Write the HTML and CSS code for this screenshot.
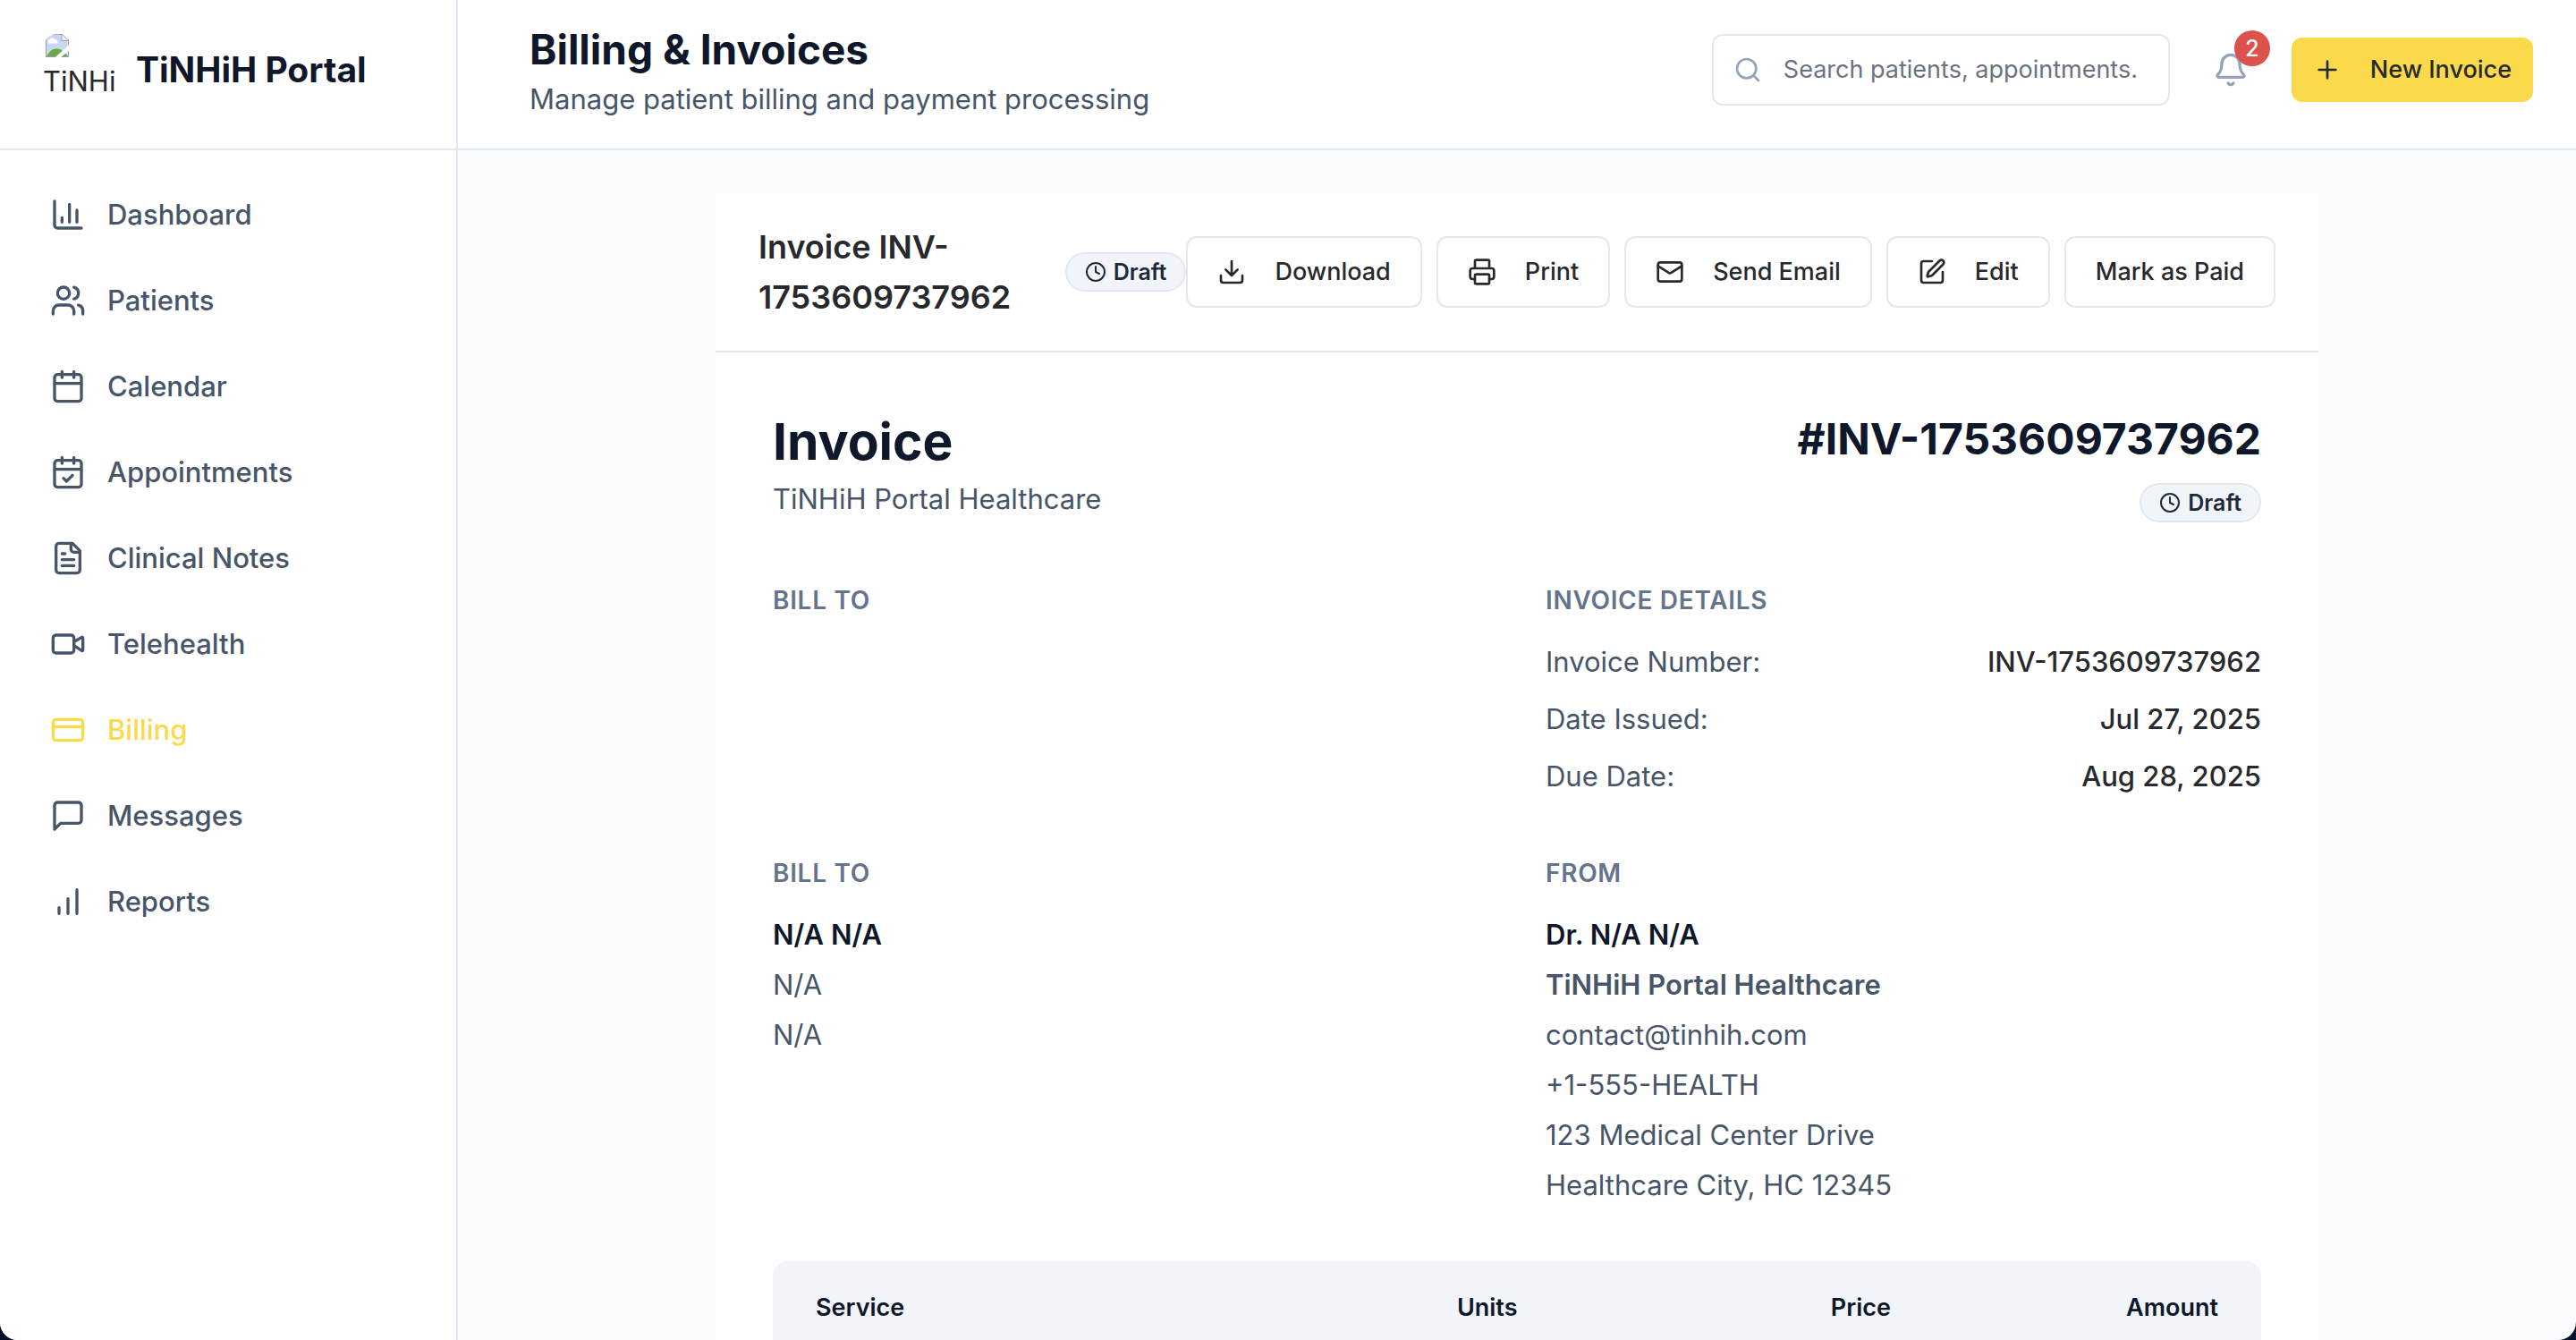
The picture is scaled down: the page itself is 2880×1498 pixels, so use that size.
FILE: index.html
```html
<!DOCTYPE html>
<html lang="en">
<head>
<meta charset="utf-8">
<title>Billing &amp; Invoices - TiNHiH Portal</title>
<link rel="stylesheet" href="styles.css">
</head>
<body>
<svg class="sprite" aria-hidden="true">
  <symbol id="i-clock" viewBox="0 0 24 24"><circle cx="12" cy="12" r="10"/><path d="M12 6v6l4 2"/></symbol>
</svg>
<div class="app">
  <aside class="sidebar">
    <div class="brand">
      <div class="logo" role="img" aria-label="TiNHiH Portal logo">
        <svg class="logo-icon" viewBox="0 0 32 32">
          <path d="M0 0h22l10 10v22H0z" fill="#c9d7f4"/>
          <path d="M4 13a4 4 0 0 1 2-6 5 5 0 0 1 8 1 3 3 0 0 1 2 5z" fill="#fff"/>
          <path d="M1 31C5 24 10 20 15 20s11 4 16 11z" fill="#6aaa46"/>
          <path d="M0.500 0.500H22L31.500 10V31.500H0.500z" fill="none" stroke="#8b8f96"/>
          <path d="M22 0v9h10z" fill="#f5f5f5" stroke="#8b8f96"/>
          <path d="M32 15v8L21 32h-8z" fill="#fff"/>
        </svg>
        <span class="logo-alt">TiNHi</span>
      </div>
      <span class="brand-name">TiNHiH Portal</span>
    </div>
    <nav class="nav">
      <a class="nav-item" href="#"><svg class="icon" viewBox="0 0 24 24"><path d="M3 3v16a2 2 0 0 0 2 2h16M18 17V9M13 17V5M8 17v-3"/></svg>Dashboard</a>
      <a class="nav-item" href="#"><svg class="icon" viewBox="0 0 24 24"><path d="M16 21v-2a4 4 0 0 0-4-4H6a4 4 0 0 0-4 4v2"/><circle cx="9" cy="7" r="4"/><path d="M22 21v-2a4 4 0 0 0-3-3.870M16 3.130a4 4 0 0 1 0 7.750"/></svg>Patients</a>
      <a class="nav-item" href="#"><svg class="icon" viewBox="0 0 24 24"><path d="M8 2v4M16 2v4M3 10h18"/><rect width="18" height="18" x="3" y="4" rx="2"/></svg>Calendar</a>
      <a class="nav-item" href="#"><svg class="icon" viewBox="0 0 24 24"><path d="M8 2v4M16 2v4M3 10h18M9 16l2 2 4-4"/><rect width="18" height="18" x="3" y="4" rx="2"/></svg>Appointments</a>
      <a class="nav-item" href="#"><svg class="icon" viewBox="0 0 24 24"><path d="M15 2H6a2 2 0 0 0-2 2v16a2 2 0 0 0 2 2h12a2 2 0 0 0 2-2V7Z"/><path d="M14 2v4a2 2 0 0 0 2 2h4M10 9H8M16 13H8M16 17H8"/></svg>Clinical Notes</a>
      <a class="nav-item" href="#"><svg class="icon" viewBox="0 0 24 24"><path d="m16 13 5.223 3.482a.5.5 0 0 0 .777-.416V7.870a.5.5 0 0 0-.752-.432L16 10.500"/><rect x="2" y="6" width="14" height="12" rx="2"/></svg>Telehealth</a>
      <a class="nav-item active" href="#" aria-current="page"><svg class="icon" viewBox="0 0 24 24"><rect width="20" height="14" x="2" y="5" rx="2"/><path d="M2 10h20"/></svg>Billing</a>
      <a class="nav-item" href="#"><svg class="icon" viewBox="0 0 24 24"><path d="M21 15a2 2 0 0 1-2 2H7l-4 4V5a2 2 0 0 1 2-2h14a2 2 0 0 1 2 2z"/></svg>Messages</a>
      <a class="nav-item" href="#"><svg class="icon" viewBox="0 0 24 24"><path d="M12 20V10M18 20V4M6 20v-4"/></svg>Reports</a>
    </nav>
  </aside>

  <div class="page">
    <header class="topbar">
      <div class="heading">
        <h1 class="page-title">Billing &amp; Invoices</h1>
        <p class="page-sub">Manage patient billing and payment processing</p>
      </div>
      <div class="tools">
        <label class="search">
          <svg class="icon icon-sm" viewBox="0 0 24 24"><circle cx="11" cy="11" r="8"/><path d="m21 21-4.300-4.300"/></svg>
          <input class="search-input" type="text" placeholder="Search patients, appointments." aria-label="Search">
        </label>
        <button class="bell" type="button" aria-label="Notifications">
          <svg class="icon" viewBox="0 0 24 24"><path d="M10.268 21a2 2 0 0 0 3.464 0M3.262 15.326A1 1 0 0 0 4 17h16a1 1 0 0 0 .740-1.673C19.410 13.956 18 12.499 18 8A6 6 0 0 0 6 8c0 4.499-1.411 5.956-2.738 7.326"/></svg>
          <span class="count">2</span>
        </button>
        <button class="btn btn-primary" type="button"><svg class="icon icon-sm" viewBox="0 0 24 24"><path d="M5 12h14M12 5v14"/></svg>New Invoice</button>
      </div>
    </header>

    <main class="content">
      <article class="card">
        <div class="card-head">
          <div class="card-title-group">
            <h2 class="card-title">Invoice INV-1753609737962</h2>
            <span class="badge"><svg class="icon icon-xs"><use href="#i-clock"/></svg>Draft</span>
          </div>
          <div class="actions">
            <button class="btn btn-outline" type="button"><svg class="icon icon-sm" viewBox="0 0 24 24"><path d="M21 15v4a2 2 0 0 1-2 2H5a2 2 0 0 1-2-2v-4M7 10l5 5 5-5M12 15V3"/></svg>Download</button>
            <button class="btn btn-outline" type="button"><svg class="icon icon-sm" viewBox="0 0 24 24"><path d="M6 18H4a2 2 0 0 1-2-2v-5a2 2 0 0 1 2-2h16a2 2 0 0 1 2 2v5a2 2 0 0 1-2 2h-2M6 9V3a1 1 0 0 1 1-1h10a1 1 0 0 1 1 1v6"/><rect x="6" y="14" width="12" height="8" rx="1"/></svg>Print</button>
            <button class="btn btn-outline" type="button"><svg class="icon icon-sm" viewBox="0 0 24 24"><rect width="20" height="16" x="2" y="4" rx="2"/><path d="m22 7-8.970 5.700a1.940 1.940 0 0 1-2.060 0L2 7"/></svg>Send Email</button>
            <button class="btn btn-outline" type="button"><svg class="icon icon-sm" viewBox="0 0 24 24"><path d="M12 3H5a2 2 0 0 0-2 2v14a2 2 0 0 0 2 2h14a2 2 0 0 0 2-2v-7"/><path d="M18.375 2.625a1 1 0 0 1 3 3l-9.013 9.014a2 2 0 0 1-.853.505l-2.873.840a.5.5 0 0 1-.620-.620l.840-2.873a2 2 0 0 1 .506-.852z"/></svg>Edit</button>
            <button class="btn btn-outline" type="button">Mark as Paid</button>
          </div>
        </div>

        <div class="card-body">
          <div class="invoice-head">
            <div>
              <h2 class="invoice-title">Invoice</h2>
              <p class="line">TiNHiH Portal Healthcare</p>
            </div>
            <div class="invoice-ref">
              <h3 class="invoice-no">#INV-1753609737962</h3>
              <span class="badge"><svg class="icon icon-xs"><use href="#i-clock"/></svg>Draft</span>
            </div>
          </div>

          <div class="columns">
            <section>
              <h4 class="label">Bill To</h4>
            </section>
            <section>
              <h4 class="label">Invoice Details</h4>
              <dl class="details">
                <div class="detail"><dt>Invoice Number:</dt><dd>INV-1753609737962</dd></div>
                <div class="detail"><dt>Date Issued:</dt><dd>Jul 27, 2025</dd></div>
                <div class="detail"><dt>Due Date:</dt><dd>Aug 28, 2025</dd></div>
              </dl>
            </section>
          </div>

          <div class="columns">
            <section>
              <h4 class="label">Bill To</h4>
              <p class="line name">N/A N/A</p>
              <p class="line">N/A</p>
              <p class="line">N/A</p>
            </section>
            <section>
              <h4 class="label">From</h4>
              <p class="line name">Dr. N/A N/A</p>
              <p class="line org">TiNHiH Portal Healthcare</p>
              <p class="line">contact@tinhih.com</p>
              <p class="line">+1-555-HEALTH</p>
              <p class="line">123 Medical Center Drive</p>
              <p class="line">Healthcare City, HC 12345</p>
            </section>
          </div>

          <table class="items">
            <thead>
              <tr>
                <th class="col-service" scope="col">Service</th>
                <th class="col-units" scope="col">Units</th>
                <th class="col-price" scope="col">Price</th>
                <th class="col-amount" scope="col">Amount</th>
              </tr>
            </thead>
          </table>
        </div>
      </article>
    </main>
  </div>
</div>
</body>
</html>
```
FILE: styles.css
```css
:root {
  --ink: #0f172a;
  --text: #27292d;
  --muted: #475569;
  --soft: #64748b;
  --faint: #94a3b8;
  --line: #e2e8f0;
  --line-soft: #e5e7eb;
  --tint: #f1f5fa;
  --bg: #f8fafc;
  --brand: #fad94a;
}

* { box-sizing: border-box; }

body {
  margin: 0;
  background: #04112a;
  color: var(--text);
  font-family: Inter, "Liberation Sans", sans-serif;
  font-size: 31px;
  line-height: 56px;
}

h1, h2, h3, h4, p, dl, dd { margin: 0; }

button, input { font: inherit; color: inherit; }

.sprite { position: absolute; width: 0; height: 0; }

.icon {
  flex: none;
  width: 40px;
  height: 40px;
  fill: none;
  stroke: currentColor;
  stroke-width: 2;
  stroke-linecap: round;
  stroke-linejoin: round;
}
.icon-sm { width: 32px; height: 32px; }
.icon-xs { width: 24px; height: 24px; }

.app {
  display: flex;
  height: 100vh;
  overflow: hidden;
  background: var(--bg);
  border-radius: 0 0 20px 20px;
}

/* Sidebar */
.sidebar {
  flex: none;
  width: 512px;
  background: #fff;
  border-right: 2px solid var(--line);
}
.brand {
  display: flex;
  align-items: center;
  gap: 24px;
  height: 168px;
  padding: 0 48px 10px;
  border-bottom: 2px solid var(--line);
}
.logo {
  flex: none;
  display: flex;
  flex-direction: column;
  width: 80px;
  height: 80px;
  overflow: hidden;
  border-radius: 16px;
}
.logo-icon { display: block; width: 32px; height: 32px; }
.logo-alt { line-height: 54px; }
.brand-name {
  color: var(--ink);
  font-size: 39px;
  font-weight: 700;
  white-space: nowrap;
}
.nav {
  display: flex;
  flex-direction: column;
  gap: 16px;
  padding: 32px 24px;
}
.nav-item {
  display: flex;
  align-items: center;
  gap: 24px;
  height: 80px;
  padding: 0 32px;
  color: var(--muted);
  font-weight: 500;
  text-decoration: none;
}
.nav-item.active { color: var(--brand); }

/* Top bar */
.page {
  flex: 1;
  display: flex;
  flex-direction: column;
  min-width: 0;
}
.topbar {
  flex: none;
  display: flex;
  align-items: center;
  justify-content: space-between;
  height: 168px;
  padding: 0 48px 0 80px;
  background: #fff;
  border-bottom: 2px solid var(--line);
}
.page-title {
  color: var(--ink);
  font-size: 46px;
  font-weight: 700;
  line-height: 56px;
}
.page-sub { color: var(--muted); }
.tools {
  display: flex;
  align-items: center;
  gap: 32px;
  padding-bottom: 10px;
}
.search {
  display: flex;
  align-items: center;
  gap: 24px;
  width: 512px;
  height: 80px;
  padding: 0 24px 0 22px;
  border: 2px solid var(--line-soft);
  border-radius: 12px;
  background: #fff;
  color: var(--faint);
}
.search-input {
  flex: 1;
  min-width: 0;
  padding: 0;
  border: 0;
  outline: 0;
  background: none;
  color: var(--text);
  font-size: 27px;
}
.search-input::placeholder { color: #6b7280; }
.bell {
  position: relative;
  display: flex;
  padding: 16px;
  border: 0;
  background: none;
  color: var(--faint);
}
.count {
  position: absolute;
  top: -8px;
  right: -8px;
  width: 40px;
  height: 40px;
  border-radius: 50%;
  background: #dc524c;
  color: #fff;
  font-size: 25px;
  font-weight: 500;
  line-height: 40px;
  text-align: center;
}

.btn {
  display: flex;
  align-items: center;
  gap: 32px;
  border-radius: 12px;
  font-size: 27px;
  font-weight: 500;
  white-space: nowrap;
}
.btn-primary {
  height: 72px;
  padding: 0 24px;
  border: 0;
  background: var(--brand);
}
.btn-outline {
  height: 80px;
  padding: 0 33px;
  border: 2px solid var(--line-soft);
  background: #fff;
}

/* Invoice card */
.content {
  flex: 1;
  min-height: 0;
  overflow: hidden;
  padding: 48px;
}
.card {
  max-width: 1792px;
  margin: 0 auto;
  background: #fff;
}
.card-head {
  display: flex;
  align-items: center;
  justify-content: space-between;
  padding: 32px 48px;
  border-bottom: 2px solid var(--line-soft);
}
.card-title-group {
  flex: 1;
  display: flex;
  align-items: center;
  gap: 32px;
}
.card-title {
  flex: 1;
  font-size: 36px;
  font-weight: 600;
  line-height: 56px;
}
.actions { display: flex; gap: 16px; }
.badge {
  display: inline-flex;
  align-items: center;
  gap: 8px;
  height: 44px;
  padding: 0 20px;
  border: 2px solid var(--line);
  border-radius: 22px;
  background: var(--tint);
  color: #1e293b;
  font-size: 25px;
  font-weight: 600;
  line-height: 40px;
}
.card-body { padding: 64px; }
.invoice-head {
  display: flex;
  justify-content: space-between;
  margin-bottom: 62px;
}
.invoice-title {
  color: var(--ink);
  font-size: 57px;
  font-weight: 700;
  line-height: 72px;
}
.invoice-ref {
  display: flex;
  flex-direction: column;
  align-items: flex-end;
  gap: 16px;
}
.invoice-no {
  color: var(--ink);
  font-size: 48px;
  font-weight: 700;
  line-height: 66px;
}
.columns {
  display: grid;
  grid-template-columns: 1fr 1fr;
  gap: 64px;
  margin-bottom: 57px;
}
.label {
  margin-bottom: 18px;
  color: var(--soft);
  font-size: 28px;
  font-weight: 600;
  line-height: 46px;
  letter-spacing: 0.025em;
  text-transform: uppercase;
}
.line { color: var(--muted); }
.line.name { color: var(--ink); font-weight: 600; }
.line.org { font-weight: 600; }
.details {
  display: flex;
  flex-direction: column;
  gap: 8px;
}
.detail {
  display: flex;
  justify-content: space-between;
}
.detail dt { color: var(--muted); }
.detail dd { font-weight: 500; }

.items {
  width: 100%;
  table-layout: fixed;
  border-collapse: separate;
  border-spacing: 0;
  border-radius: 16px 16px 0 0;
  background: var(--tint);
  color: var(--ink);
  font-size: 27px;
  line-height: 48px;
}
.items th { padding: 28px 48px; font-weight: 600; }
.col-service { width: 40%; text-align: left; }
.col-units { width: 16%; text-align: center; }
.col-price { width: 22%; text-align: right; }
.col-amount { width: 22%; text-align: right; }
```
